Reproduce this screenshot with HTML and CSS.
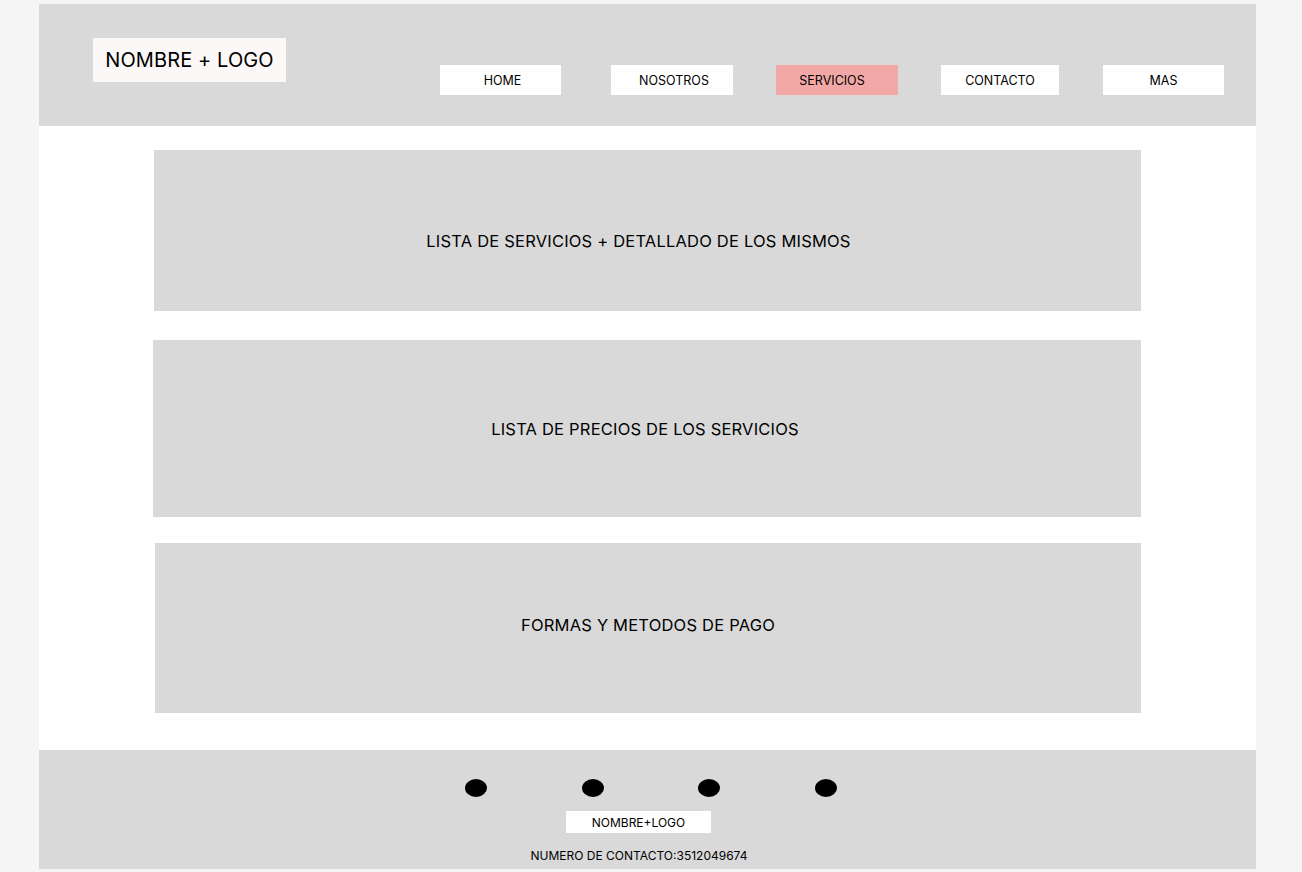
FILE: index.html
```html
<!DOCTYPE html>
<html lang="es">
<head>
<meta charset="utf-8">
<title>Servicios</title>
<link rel="stylesheet" href="styles.css">
</head>
<body>
<div class="frame">
  <header class="header">
    <div class="logo">NOMBRE + LOGO</div>
    <nav class="nav">
      <a class="nav-item nav-home">HOME</a>
      <a class="nav-item nav-wide nav-shift">NOSOTROS</a>
      <a class="nav-item nav-wide nav-active">SERVICIOS</a>
      <a class="nav-item nav-narrow">CONTACTO</a>
      <a class="nav-item">MAS</a>
    </nav>
  </header>
  <main class="main">
    <section class="block block-services">LISTA DE SERVICIOS + DETALLADO DE LOS MISMOS</section>
    <section class="block block-prices">LISTA DE PRECIOS DE LOS SERVICIOS</section>
    <section class="block block-payment">FORMAS Y METODOS DE PAGO</section>
  </main>
  <footer class="footer">
    <div class="socials">
      <span class="dot"></span>
      <span class="dot"></span>
      <span class="dot"></span>
      <span class="dot"></span>
    </div>
    <div class="footer-logo">NOMBRE+LOGO</div>
    <div class="contact">NUMERO DE CONTACTO:3512049674</div>
  </footer>
</div>
</body>
</html>
```

FILE: styles.css
```css
* { box-sizing: border-box; }

html, body {
  margin: 0;
  padding: 0;
}

body {
  background: #f5f5f5;
  font-family: Inter, "Noto Sans", "Liberation Sans", sans-serif;
  color: #000;
  padding-top: 4px;
}

.frame {
  width: 1217px;
  margin-left: 39px;
  background: #ffffff;
  display: flex;
  flex-direction: column;
}

.header {
  height: 122px;
  background: #d9d9d9;
  display: flex;
  align-items: flex-start;
  padding: 0 32px 0 54px;
}

.logo {
  margin-top: 34px;
  width: 193px;
  height: 44px;
  background: #fcf8f7;
  display: flex;
  align-items: center;
  justify-content: center;
  font-size: 20px;
  letter-spacing: 0.1px;
}

.nav {
  margin-left: auto;
  margin-top: 61px;
  display: flex;
  gap: 43px;
}

.nav-item {
  width: 121px;
  height: 30px;
  background: #ffffff;
  display: flex;
  align-items: center;
  justify-content: center;
  font-size: 12.5px;
  color: #000;
  text-decoration: none;
}

.nav-home { margin-right: 7px; padding-left: 4px; }
.nav-shift { padding-left: 4px; }
.nav-wide { width: 122px; }
.nav-narrow { width: 118px; margin-right: 1px; }
.nav-active { background: #f2a8a6; padding: 0 10px 0 0; }

.main {
  height: 624px;
  display: flex;
  flex-direction: column;
  padding-top: 24px;
}

.block {
  background: #d9d9d9;
  display: flex;
  align-items: center;
  justify-content: center;
  font-size: 16.5px;
  letter-spacing: 0.2px;
}

.block-services {
  margin-left: 115px;
  width: 987px;
  height: 161px;
  padding: 20px 18px 0 0;
}

.block-prices {
  margin-top: 29px;
  margin-left: 114px;
  width: 988px;
  height: 177px;
  padding-right: 4px;
}

.block-payment {
  margin-top: 26px;
  margin-left: 116px;
  width: 986px;
  height: 170px;
  padding-bottom: 6px;
}

.footer {
  height: 119px;
  background: #d9d9d9;
  display: flex;
  flex-direction: column;
  align-items: center;
  padding-top: 29px;
}

.socials {
  display: flex;
  gap: 94.7px;
  margin-left: 7px;
}

.dot {
  width: 22px;
  height: 18px;
  border-radius: 50%;
  background: #000;
}

.footer-logo {
  margin-top: 14px;
  width: 145px;
  height: 22px;
  background: #ffffff;
  display: flex;
  align-items: center;
  justify-content: center;
  font-size: 12px;
  margin-right: 18px;
}

.contact {
  margin-top: 15px;
  font-size: 12px;
  line-height: 16px;
  margin-right: 17px;
}
```
